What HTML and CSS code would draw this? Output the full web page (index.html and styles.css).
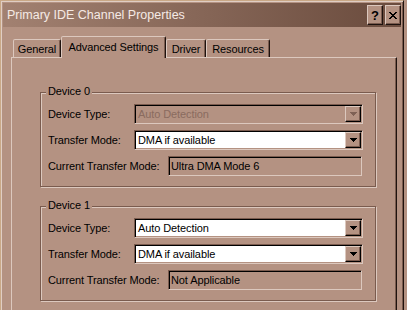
FILE: index.html
```html
<!DOCTYPE html>
<html lang="en">
<head>
    <meta charset="UTF-8">
    <title>Primary IDE Channel Properties</title>
    <link rel="stylesheet" href="styles.css">
</head>
<body>
    <div class="window">
        <div class="titlebar">
            <span class="title">Primary IDE Channel Properties</span>
            <div class="caption">
                <span class="cap-btn">?</span>
                <span class="cap-btn">
                    <svg width="8" height="7" viewBox="0 0 8 7" shape-rendering="crispEdges">
                        <path d="M0 0h2v1H0z M6 0h2v1H6z M1 1h2v1H1z M5 1h2v1H5z M2 2h4v1H2z M3 3h2v1H3z M2 4h4v1H2z M1 5h2v1H1z M5 5h2v1H5z M0 6h2v1H0z M6 6h2v1H6z"/>
                    </svg>
                </span>
            </div>
        </div>

        <div class="dialog">
            <div class="tabs">
                <div class="tab" style="width:48px">General</div>
                <div class="tab active" style="width:105px">Advanced Settings</div>
                <div class="tab" style="width:40px">Driver</div>
                <div class="tab" style="width:64px">Resources</div>
            </div>

            <div class="panel">
                <div class="group">
                    <div class="legend">Device 0</div>
                    <div class="row">
                        <span class="label">Device Type:</span>
                        <div class="combo disabled">
                            <span>Auto Detection</span>
                            <span class="drop">
                                <svg width="7" height="4" viewBox="0 0 7 4" shape-rendering="crispEdges"><path d="M0 0h7v1H0z M1 1h5v1H1z M2 2h3v1H2z M3 3h1v1H3z"/></svg>
                            </span>
                        </div>
                    </div>
                    <div class="row">
                        <span class="label">Transfer Mode:</span>
                        <div class="combo">
                            <span>DMA if available</span>
                            <span class="drop">
                                <svg width="7" height="4" viewBox="0 0 7 4" shape-rendering="crispEdges"><path d="M0 0h7v1H0z M1 1h5v1H1z M2 2h3v1H2z M3 3h1v1H3z"/></svg>
                            </span>
                        </div>
                    </div>
                    <div class="row">
                        <span class="label wide">Current Transfer Mode:</span>
                        <div class="field">Ultra DMA Mode 6</div>
                    </div>
                </div>

                <div class="group second">
                    <div class="legend">Device 1</div>
                    <div class="row">
                        <span class="label">Device Type:</span>
                        <div class="combo">
                            <span>Auto Detection</span>
                            <span class="drop">
                                <svg width="7" height="4" viewBox="0 0 7 4" shape-rendering="crispEdges"><path d="M0 0h7v1H0z M1 1h5v1H1z M2 2h3v1H2z M3 3h1v1H3z"/></svg>
                            </span>
                        </div>
                    </div>
                    <div class="row">
                        <span class="label">Transfer Mode:</span>
                        <div class="combo">
                            <span>DMA if available</span>
                            <span class="drop">
                                <svg width="7" height="4" viewBox="0 0 7 4" shape-rendering="crispEdges"><path d="M0 0h7v1H0z M1 1h5v1H1z M2 2h3v1H2z M3 3h1v1H3z"/></svg>
                            </span>
                        </div>
                    </div>
                    <div class="row">
                        <span class="label wide">Current Transfer Mode:</span>
                        <div class="field">Not Applicable</div>
                    </div>
                </div>
            </div>
        </div>
    </div>
</body>
</html>
```

FILE: styles.css
```css
* {
    box-sizing: border-box;
}

body {
    margin: 0;
    background: #b49282;
    font-family: "Liberation Sans", Arial, sans-serif;
    font-size: 11px;
    letter-spacing: -0.1px;
    color: #000;
    overflow: hidden;
}

.window {
    width: 404px;
    height: 310px;
    background: #b49282;
    border-left: 1px solid #c9a886;
    border-top: 1px solid #c9a886;
    border-right: 1px solid #1e120e;
    padding: 2px 2px 0 2px;
    box-shadow: inset 1px 1px 0 #e0cec4, inset -1px 0 0 #7a5b4e;
    overflow: hidden;
}

.titlebar {
    height: 24px;
    display: flex;
    align-items: center;
    justify-content: space-between;
    padding-left: 4px;
    background: linear-gradient(to right, #a28171, #6a4b3d);
    color: #f5eae5;
    font-size: 12.5px;
    letter-spacing: 0;
}

.caption {
    display: flex;
    gap: 2px;
}

.cap-btn {
    width: 16px;
    height: 20px;
    display: flex;
    align-items: center;
    justify-content: center;
    background: #b49282;
    border: 1px solid;
    border-color: #dcc8be #1e120e #1e120e #dcc8be;
    box-shadow: inset -1px -1px 0 #7a5b4e;
    color: #000;
    font-weight: bold;
    font-size: 13px;
}

.dialog {
    padding: 9px 4px 0 8px;
}

.tabs {
    display: flex;
    align-items: flex-end;
    height: 22px;
    padding-left: 2px;
    margin-bottom: -1px;
    position: relative;
    z-index: 1;
}

.tab {
    height: 18px;
    margin-bottom: 1px;
    display: flex;
    align-items: center;
    justify-content: center;
    background: #b49282;
    border: 1px solid;
    border-bottom: none;
    border-color: #dcc8be #1e120e transparent #dcc8be;
    border-radius: 2px 2px 0 0;
    box-shadow: inset -1px 0 0 #7a5b4e;
}

.tab.active {
    height: 22px;
    margin-bottom: 0;
    padding-bottom: 2px;
}

.panel {
    height: 260px;
    border-left: 1px solid #dcc8be;
    border-top: 1px solid #dcc8be;
    border-right: 1px solid #1e120e;
    box-shadow: inset -1px 0 0 #7a5b4e;
    padding: 34px 0 0 28px;
}

.group {
    width: 336px;
    border: 1px solid #7a5b4e;
    box-shadow: 1px 1px 0 #dcc8be, inset 1px 1px 0 #dcc8be;
    padding: 0 0 10px 7px;
}

.group.second {
    margin-top: 19px;
}

.legend {
    width: fit-content;
    height: 13px;
    line-height: 13px;
    margin: -8px 0 6px -2px;
    padding: 0 2px;
    background: #b49282;
}

.row {
    display: flex;
    align-items: center;
    height: 20px;
    margin-bottom: 6px;
}

.row:last-child {
    margin-bottom: 0;
}

.label {
    width: 86px;
    flex: none;
}

.label.wide {
    width: 120px;
}

.combo {
    width: 229px;
    height: 20px;
    display: flex;
    align-items: center;
    justify-content: space-between;
    padding: 1px 1px 1px 3px;
    background: #fff;
    border: 1px solid;
    border-color: #7a5b4e #dcc8be #dcc8be #7a5b4e;
    box-shadow: inset 1px 1px 0 #000, inset -1px -1px 0 #b49282;
}

.combo.disabled {
    background: #b49282;
    color: #8a6b5f;
}

.drop {
    width: 16px;
    height: 16px;
    flex: none;
    display: flex;
    align-items: center;
    justify-content: center;
    background: #b49282;
    border: 1px solid;
    border-color: #dcc8be #000 #000 #dcc8be;
    box-shadow: inset -1px -1px 0 #7a5b4e;
}

.combo.disabled .drop svg {
    fill: #7f6155;
}

.field {
    width: 194px;
    height: 20px;
    display: flex;
    align-items: center;
    padding-left: 2px;
    background: #b49282;
    border: 1px solid;
    border-color: #7a5b4e #dcc8be #dcc8be #7a5b4e;
    box-shadow: inset 1px 1px 0 #000, inset -1px -1px 0 #b49282;
}
```
